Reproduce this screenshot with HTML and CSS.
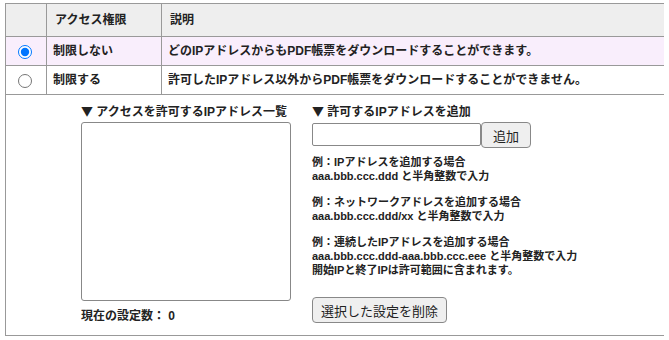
FILE: index.html
```html
<!DOCTYPE html>
<html lang="ja">
<head>
  <meta charset="UTF-8" />
  <title>IPアドレス制限</title>
  <link rel="stylesheet" href="styles.css">
</head>
<body>
  <table class="access-table">
    <tr>
      <th class="col-radio"></th>
      <th class="col-name">アクセス権限</th>
      <th>説明</th>
    </tr>
    <tr class="selected">
      <td class="col-radio"><input type="radio" name="restrict" checked></td>
      <td>制限しない</td>
      <td>どのIPアドレスからもPDF帳票をダウンロードすることができます。</td>
    </tr>
    <tr>
      <td class="col-radio"><input type="radio" name="restrict"></td>
      <td>制限する</td>
      <td>許可したIPアドレス以外からPDF帳票をダウンロードすることができません。</td>
    </tr>
    <tr>
      <td colspan="3" class="ip-cell">
        <div class="ip-panel">
          <!-- List -->
          <div class="ip-list">
            <div class="panel-title"><span class="mark">▼</span> アクセスを許可するIPアドレス一覧</div>
            <select class="ip-select" multiple></select>
            <div class="ip-count">現在の設定数： 0</div>
          </div>

          <!-- Add -->
          <div class="ip-add">
            <div class="panel-title"><span class="mark">▼</span> 許可するIPアドレスを追加</div>
            <div class="add-row">
              <input type="text" class="ip-input">
              <button class="btn btn-add">追加</button>
            </div>
            <p class="example">例：IPアドレスを追加する場合<br>aaa.bbb.ccc.ddd と半角整数で入力</p>
            <p class="example">例：ネットワークアドレスを追加する場合<br>aaa.bbb.ccc.ddd/xx と半角整数で入力</p>
            <p class="example">例：連続したIPアドレスを追加する場合<br>aaa.bbb.ccc.ddd-aaa.bbb.ccc.eee と半角整数で入力<br>開始IPと終了IPは許可範囲に含まれます。</p>
            <button class="btn btn-delete">選択した設定を削除</button>
          </div>
        </div>
      </td>
    </tr>
  </table>
</body>
</html>
```

FILE: styles.css
```css
/* Base */
body {
  margin: 3px 5px;
  font-family: "Liberation Sans", "Noto Sans CJK JP", sans-serif;
  font-size: 12px;
  color: #222;
  background: #fff;
}

/* Table */
.access-table {
  width: 660px;
  border-collapse: collapse;
  border: 1px solid #999;
}

.access-table th,
.access-table td {
  border: 1px solid #999;
  text-align: left;
  font-weight: bold;
  line-height: 16px;
}

.access-table th {
  background: #eee;
  padding: 8px 8px;
}

.access-table td {
  padding: 6px 8px 6px 6px;
}

.access-table tr.selected td {
  background: #f9eefc;
}

.col-radio {
  width: 24px;
  text-align: center !important;
}

.col-name {
  width: 98px;
}

.col-radio input {
  margin: 0;
  width: 14px;
  height: 14px;
  vertical-align: middle;
}

/* IP panel */
.access-table td.ip-cell {
  padding: 9px 0 10px 75px;
}

.ip-panel {
  display: flex;
  gap: 21px;
}

.panel-title {
  height: 17px;
  line-height: 17px;
}

.panel-title .mark {
  font-family: "Noto Sans CJK JP", sans-serif;
  line-height: 1;
}

.ip-select {
  display: block;
  width: 210px;
  height: 179px;
  margin: 1px 0 0;
  border: 1px solid #888;
  border-radius: 3px;
  background: #fff;
}

.ip-count {
  margin-top: 7px;
  line-height: 17px;
}

.add-row {
  display: flex;
  align-items: flex-start;
  margin-top: 1px;
}

.ip-input {
  width: 169px;
  height: 23px;
  box-sizing: border-box;
  margin: 0;
  margin-top: 1px;
  border: 1px solid #888;
  border-radius: 2px;
  font-size: 12px;
}

.btn {
  font-family: "Noto Sans CJK JP", sans-serif;
  font-size: 13px;
  font-weight: normal;
  color: #222;
  background: #efefef;
  border: 1px solid #888;
  border-radius: 4px;
  margin: 0;
  box-sizing: border-box;
}

.btn-add {
  width: 50px;
  height: 26px;
}

.example {
  margin: 12px 0 0;
  font-size: 11px;
  line-height: 14px;
}

.add-row + .example {
  margin-top: 7px;
}

.btn-delete {
  margin-top: 20px;
  width: 135px;
  height: 26px;
  padding: 0;
}
```
